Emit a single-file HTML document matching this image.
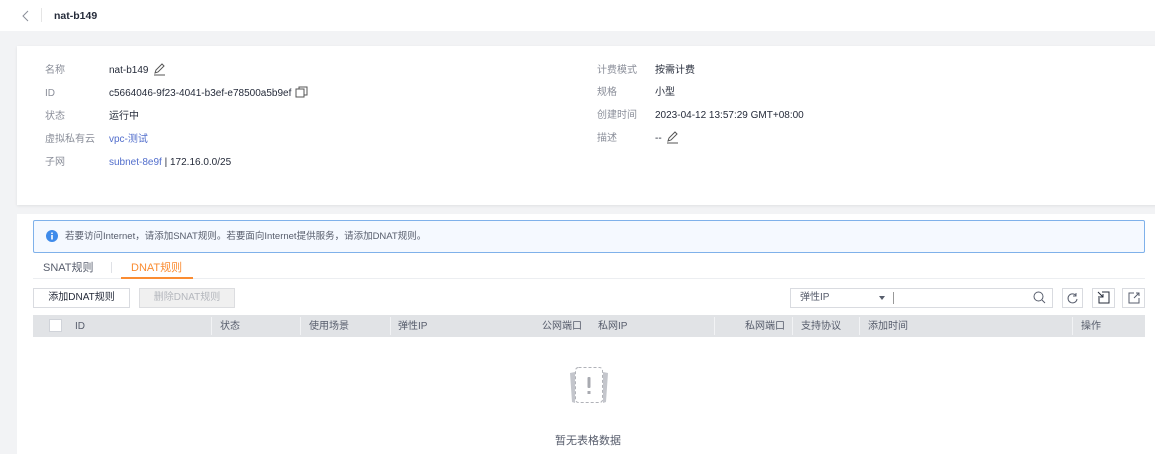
<!DOCTYPE html>
<html><head><meta charset="utf-8"><style>
*{margin:0;padding:0;box-sizing:border-box}
body{width:1155px;height:445px;overflow:hidden;background:#f2f3f5;font-family:"Liberation Sans","Noto Sans CJK SC",sans-serif;font-size:10px;color:#252b3a;position:relative}
.a{position:absolute;white-space:nowrap;line-height:14px}
.lbl{color:#8a8e99}
.link{color:#526ecc}
.th{position:absolute;top:317px;height:20px;line-height:20px;color:#575d6c;font-size:10px;white-space:nowrap}
.sep{position:absolute;top:317px;width:1px;height:18px;background:#f2f3f5}
</style></head><body>
<div class="a" style="left:0;top:0;width:1155px;height:31px;background:#fff"></div>
<svg class="a" style="left:22px;top:10px" width="8" height="12"><path d="M6 1L1 6l5 5" fill="none" stroke="#8a8e99" stroke-width="1"/></svg>
<div class="a" style="left:41px;top:8px;width:1px;height:14px;background:#e5e5e5"></div>
<div class="a" style="left:54px;top:9px;font-weight:bold;font-size:10.5px">nat-b149</div>

<div class="a" style="left:17px;top:46px;width:1150px;height:159px;background:#fff;box-shadow:0 1px 3px rgba(0,0,0,.08)"></div>
<div class="a lbl" style="left:45px;top:64px">名称</div>
<div class="a" style="left:109px;top:64px">nat-b149</div>
<svg class="a" style="left:153px;top:63px" width="13" height="13"><path d="M2 10l1-3 6-6 2 2-6 6z M1 12h11" fill="none" stroke="#555" stroke-width="1"/></svg>
<div class="a lbl" style="left:45px;top:87px">ID</div>
<div class="a" style="left:109px;top:87px">c5664046-9f23-4041-b3ef-e78500a5b9ef</div>
<svg class="a" style="left:295px;top:86px" width="13" height="12"><rect x="1" y="3" width="8" height="8" fill="none" stroke="#555"/><path d="M4 3V1h8v8h-3" fill="none" stroke="#555"/></svg>
<div class="a lbl" style="left:45px;top:110px">状态</div>
<div class="a" style="left:109px;top:110px">运行中</div>
<div class="a lbl" style="left:45px;top:133px">虚拟私有云</div>
<div class="a link" style="left:109px;top:133px">vpc-测试</div>
<div class="a lbl" style="left:45px;top:156px">子网</div>
<div class="a" style="left:109px;top:156px"><span class="link">subnet-8e9f</span> | 172.16.0.0/25</div>
<div class="a lbl" style="left:597px;top:64px">计费模式</div>
<div class="a" style="left:655px;top:64px">按需计费</div>
<div class="a lbl" style="left:597px;top:86px">规格</div>
<div class="a" style="left:655px;top:86px">小型</div>
<div class="a lbl" style="left:597px;top:109px">创建时间</div>
<div class="a" style="left:655px;top:109px">2023-04-12 13:57:29 GMT+08:00</div>
<div class="a lbl" style="left:597px;top:132px">描述</div>
<div class="a" style="left:655px;top:132px">--</div>
<svg class="a" style="left:666px;top:131px" width="13" height="13"><path d="M2 10l1-3 6-6 2 2-6 6z M1 12h11" fill="none" stroke="#555" stroke-width="1"/></svg>

<div class="a" style="left:17px;top:214px;width:1150px;height:240px;background:#fff"></div>
<div class="a" style="left:33px;top:220px;width:1112px;height:33px;background:#f5f9ff;border:1px solid #7fb1ea;border-radius:2px"></div>
<svg class="a" style="left:46px;top:230px" width="12" height="12"><circle cx="6" cy="6" r="6" fill="#3f8bea"/><rect x="5.2" y="5" width="1.6" height="4.5" fill="#fff"/><circle cx="6" cy="3.3" r="0.9" fill="#fff"/></svg>
<div class="a" style="left:65px;top:230px;font-size:9.5px;color:#575d6c">若要访问Internet，请添加SNAT规则。若要面向Internet提供服务，请添加DNAT规则。</div>
<div class="a" style="left:43px;top:261px;font-size:11px;color:#575d6c">SNAT规则</div>
<div class="a" style="left:111px;top:262px;width:1px;height:11px;background:#dfe1e6"></div>
<div class="a" style="left:131px;top:261px;font-size:11px;color:#fa8c32">DNAT规则</div>
<div class="a" style="left:33px;top:278px;width:1112px;height:1px;background:#eceef1"></div>
<div class="a" style="left:121px;top:277px;width:72px;height:2px;background:#fa8c32"></div>

<div class="a" style="left:33px;top:288px;width:97px;height:20px;border:1px solid #d9dbe0;text-align:center;line-height:18px">添加DNAT规则</div>
<div class="a" style="left:139px;top:288px;width:96px;height:20px;border:1px solid #dcdde0;background:#f0f0f0;color:#b4b7bd;text-align:center;line-height:18px">删除DNAT规则</div>
<div class="a" style="left:790px;top:288px;width:263px;height:20px;border:1px solid #d9dbe0"></div>
<div class="a" style="left:800px;top:291px;color:#575d6c">弹性IP</div>
<div class="a" style="left:879px;top:296px;border:3.5px solid transparent;border-top:4px solid #575d6c;border-bottom:none"></div>
<div class="a" style="left:893px;top:292px;width:1px;height:12px;background:#999"></div>
<svg class="a" style="left:1033px;top:291px" width="13" height="13"><circle cx="5.5" cy="5.5" r="4.5" fill="none" stroke="#575d6c"/><path d="M9 9l3 3" stroke="#575d6c"/></svg>
<div class="a" style="left:1062px;top:288px;width:21px;height:20px;border:1px solid #d9dbe0"></div>
<svg class="a" style="left:1066px;top:292px" width="13" height="13"><path d="M10 3.5A4.5 4.5 0 1 0 11 7" fill="none" stroke="#575d6c"/><path d="M10 1v3h-3" fill="none" stroke="#575d6c"/></svg>
<div class="a" style="left:1092px;top:288px;width:23px;height:20px;border:1px solid #d9dbe0"></div>
<svg class="a" style="left:1097px;top:291px" width="14" height="14"><path d="M5 1h7v11H2V5" fill="none" stroke="#252b3a"/><path d="M1 1l5 5M6 3v3H3" fill="none" stroke="#252b3a"/></svg>
<div class="a" style="left:1122px;top:288px;width:23px;height:20px;border:1px solid #d9dbe0"></div>
<svg class="a" style="left:1127px;top:291px" width="14" height="14"><path d="M7 2H2v10h10V7" fill="none" stroke="#575d6c"/><path d="M7 7l5-5M9 2h3v3" fill="none" stroke="#575d6c"/></svg>

<div class="a" style="left:33px;top:315px;width:1112px;height:22px;background:#e1e3e6"></div>
<div class="a" style="left:49px;top:319px;width:13px;height:13px;background:#fff;border:1px solid #d0d3d9"></div>
<div class="th" style="left:75px">ID</div>
<div class="sep" style="left:211px"></div><div class="th" style="left:220px">状态</div>
<div class="sep" style="left:300px"></div><div class="th" style="left:309px">使用场景</div>
<div class="sep" style="left:390px"></div><div class="th" style="left:398px">弹性IP</div>
<div class="th" style="left:542px">公网端口</div><div class="th" style="left:598px">私网IP</div>
<div class="sep" style="left:714px"></div><div class="th" style="left:745px">私网端口</div>
<div class="sep" style="left:792px"></div><div class="th" style="left:801px">支持协议</div>
<div class="sep" style="left:859px"></div><div class="th" style="left:868px">添加时间</div>
<div class="sep" style="left:1072px"></div><div class="th" style="left:1081px">操作</div>

<svg class="a" style="left:567px;top:366px" width="44" height="42"><path d="M3 7l5-1v31l-3-1z M41 7l-5-1v31l3-1z" fill="#c4c6cc"/><rect x="8.5" y="1.5" width="27" height="35" rx="3" fill="#fff" stroke="#b0b2b8" stroke-dasharray="3 2"/><rect x="20.5" y="11" width="3" height="11" rx="1" fill="#a8aab0"/><rect x="20.5" y="25" width="3" height="3" fill="#a8aab0"/></svg>
<div class="a" style="left:555px;top:434px;font-size:11px;color:#575d6c">暂无表格数据</div>
</body></html>
